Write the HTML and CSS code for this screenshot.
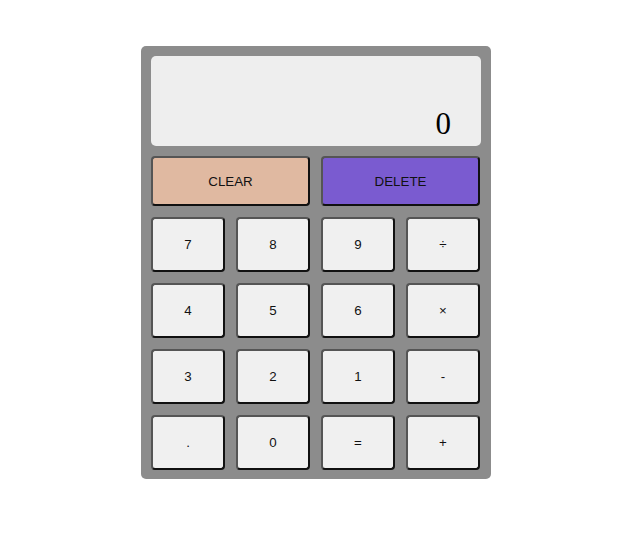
FILE: index.html
```html
<!DOCTYPE html>
<html>
<head>
<meta charset="utf-8">
<link rel="stylesheet" href="styles.css">
</head>
<body>
<div class="calc">
  <div class="display"><span class="value">0</span></div>
  <div class="keys">
    <button class="key wide clear">CLEAR</button>
    <button class="key wide delete">DELETE</button>
    <button class="key">7</button>
    <button class="key">8</button>
    <button class="key">9</button>
    <button class="key">÷</button>
    <button class="key">4</button>
    <button class="key">5</button>
    <button class="key">6</button>
    <button class="key">×</button>
    <button class="key">3</button>
    <button class="key">2</button>
    <button class="key">1</button>
    <button class="key">-</button>
    <button class="key">.</button>
    <button class="key">0</button>
    <button class="key">=</button>
    <button class="key">+</button>
  </div>
</div>
</body>
</html>
```
FILE: styles.css
```css
html, body {
  margin: 0;
  padding: 0;
  background: #fff;
}
body {
  padding: 46px 0 0 141px;
}
.calc {
  width: 350px;
  box-sizing: border-box;
  padding: 10px 10px 9px 10px;
  background: #8c8c8c;
  border-radius: 5px;
}
.display {
  height: 90px;
  box-sizing: border-box;
  background: #eeeeee;
  border-radius: 5px;
  display: flex;
  align-items: flex-end;
  justify-content: flex-end;
  padding: 0 30px 6px 0;
  font-family: "Liberation Serif", serif;
  font-size: 31px;
  line-height: 32px;
  color: #000;
}
.keys {
  margin-top: 10px;
  display: grid;
  grid-template-columns: repeat(4, 74px);
  grid-template-rows: 50px repeat(4, 55px);
  column-gap: 11px;
  row-gap: 11px;
}
.key {
  margin: 0;
  padding: 0;
  background: #f0f0f0;
  border: 2px solid;
  border-color: #555 #111 #111 #555;
  border-radius: 4px;
  font-family: "Liberation Sans", Arial, sans-serif;
  font-size: 13.333px;
  color: #111;
}
.wide {
  grid-column: span 2;
}
.clear {
  background: #e0b9a1;
}
.delete {
  background: #7a5bd0;
  color: #111;
}
```
